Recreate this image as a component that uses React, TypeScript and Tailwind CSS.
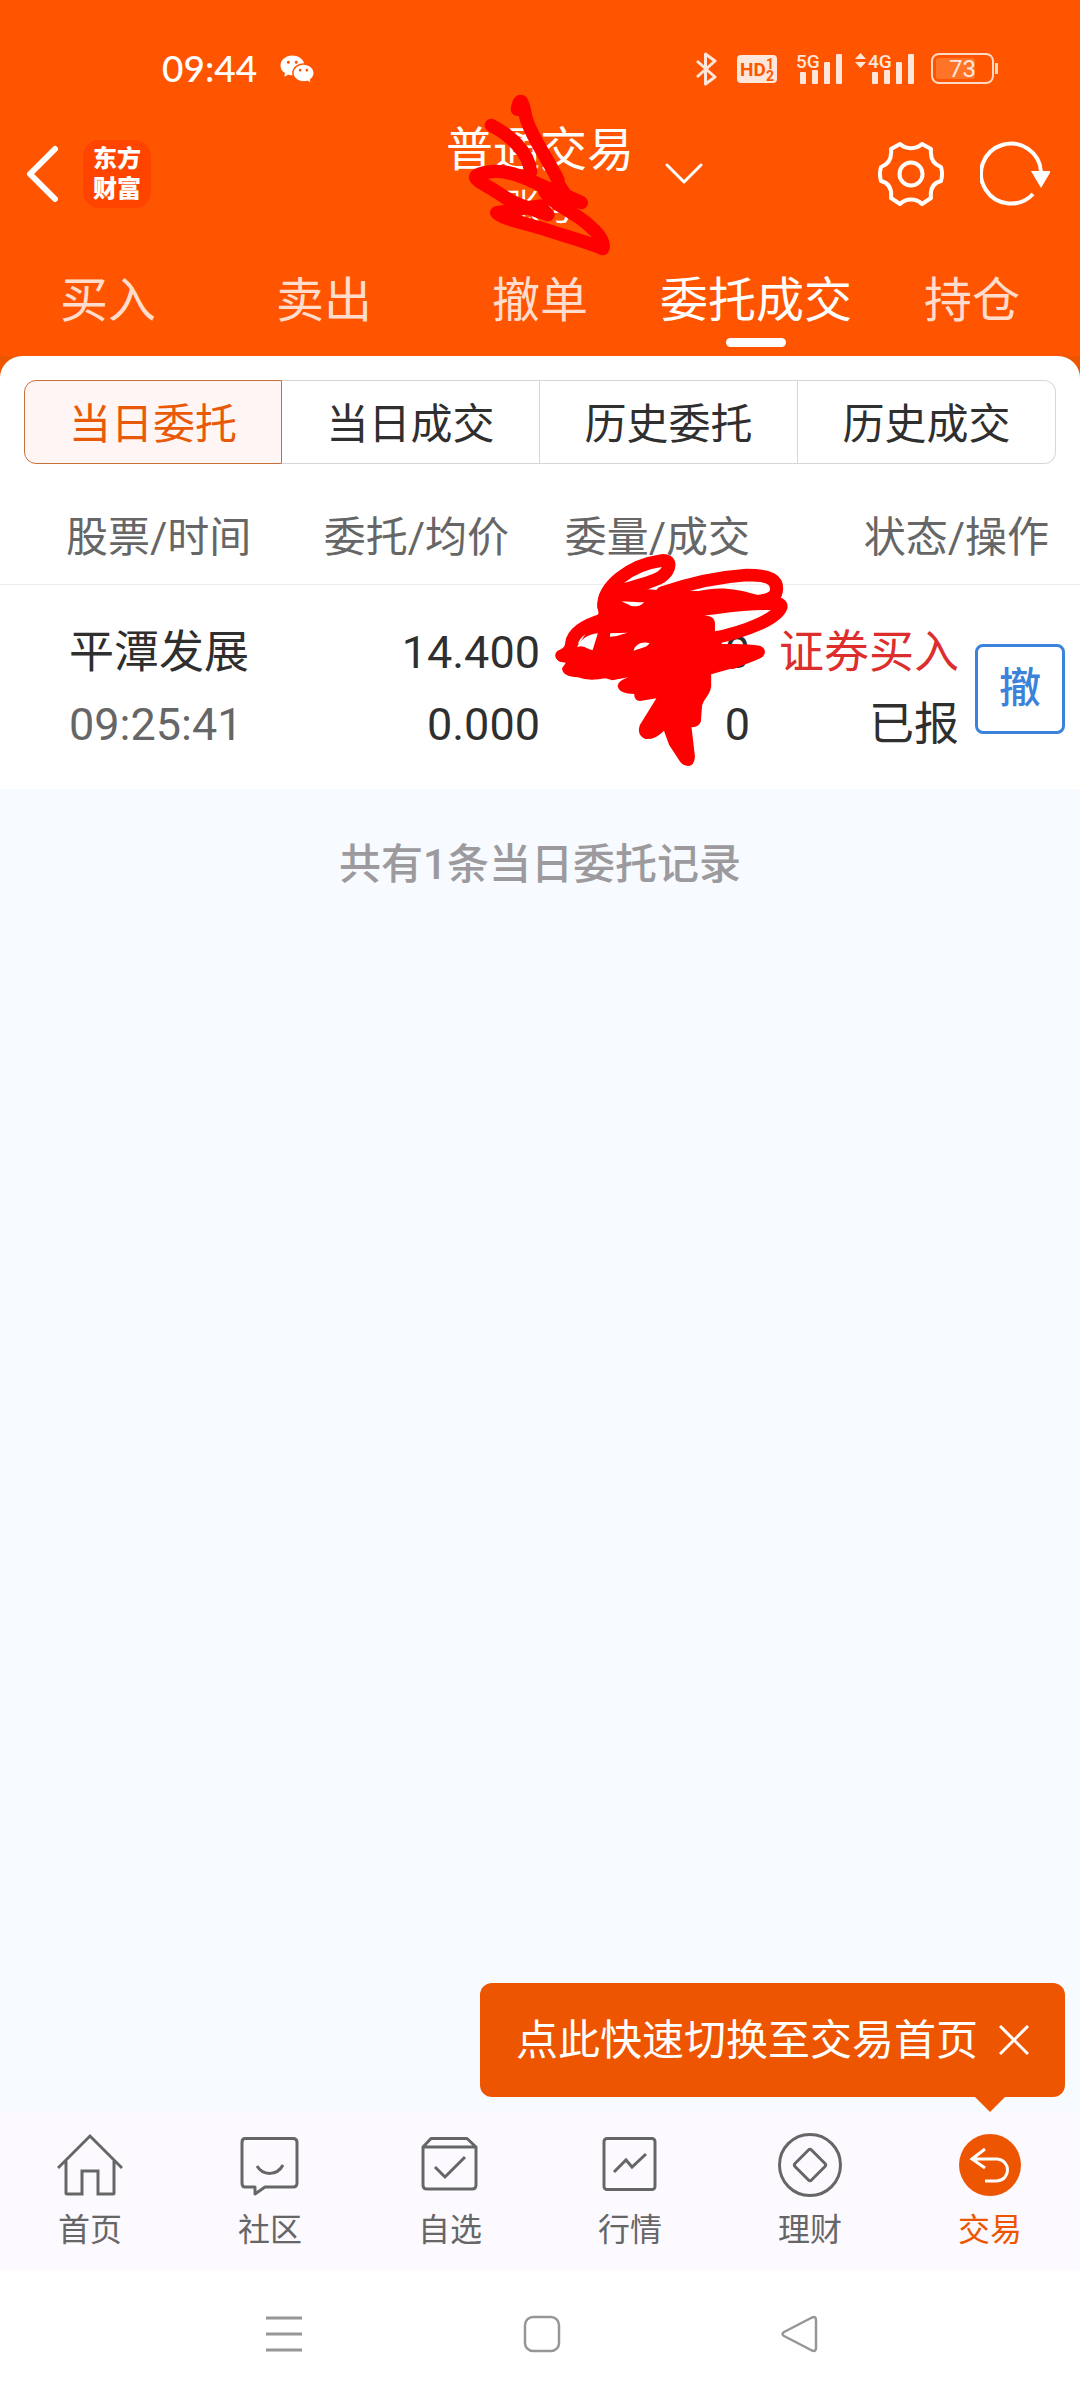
import type { ReactNode } from "react";
import { RiWechatFill } from "react-icons/ri";

const tradeTabs = ["买入", "卖出", "撤单", "委托成交", "持仓"];
const orderTabs = ["当日委托", "当日成交", "历史委托", "历史成交"];

/* ---------- Status bar ---------- */

function Signal({ label, arrows }: { label: string; arrows?: boolean }) {
  const x = arrows ? 14 : 0;
  return (
    <svg width={46 + x} height="34" viewBox={`0 0 ${46 + x} 34`} fill="#ffe6da" overflow="visible">
      {arrows && <path d="M0 7 5.500 1 11 7ZM0 10h11l-5.500 6Z" />}
      <text x={x - 1} y="16" fontFamily="Roboto" fontSize="19" fontWeight="500">
        {label}
      </text>
      <rect x={x + 3} y="20" width="6" height="12" rx="1" />
      <rect x={x + 15} y="18" width="6" height="14" rx="1" />
      <rect x={x + 27} y="10" width="6" height="22" rx="1" />
      <rect x={x + 39} y="2" width="6" height="30" rx="1" />
    </svg>
  );
}

function StatusBar() {
  return (
    <div className="flex items-center pt-12 pr-[82px] pl-[162px] text-white">
      <span className="pb-0.5 font-['Lato'] text-[37px] leading-10 font-medium">09:44</span>
      <RiWechatFill className="ml-[22px] size-9" />
      <div className="ml-auto flex items-center">
        <svg width="21" height="34" viewBox="0 0 21 34" fill="none" stroke="#ffe6da" strokeWidth="3">
          <path d="M1 9 19 25 9.500 32V2L19 9 1 25" strokeLinejoin="round" />
        </svg>
        <svg className="ml-5" width="40" height="28" viewBox="0 0 40 28">
          <rect width="40" height="28" rx="4" fill="#ffe6da" />
          <g fill="#ff5500" fontFamily="Roboto" fontWeight="700">
            <text x="3" y="21" fontSize="19">HD</text>
            <text x="29" y="14" fontSize="14">1</text>
            <text x="29" y="26" fontSize="14">2</text>
          </g>
        </svg>
        <div className="ml-5">
          <Signal label="5G" />
        </div>
        <div className="ml-3">
          <Signal label="4G" arrows />
        </div>
        <svg className="ml-4" width="67" height="32" viewBox="0 0 67 32">
          <rect x="1" y="1" width="61" height="29" rx="7" fill="none" stroke="#ffd9c4" strokeWidth="2" />
          <rect x="5" y="5" width="39" height="21" rx="3" fill="#ff7427" />
          <path d="M65.500 10v11" stroke="#ffd9c4" strokeWidth="3" />
          <text x="18" y="24" fill="#ffe6da" fontFamily="Roboto" fontSize="24">73</text>
        </svg>
      </div>
    </div>
  );
}

/* ---------- Header ---------- */

function GearIcon() {
  return (
    <svg width="66" height="66" viewBox="0 0 66 66" fill="none" stroke="#fff" strokeWidth="4" strokeLinejoin="round">
      <path d="M22 3C28 8.500 38 8.500 44 3L53 8C52 17 55 23 63 26C64.500 31 64.500 35 63 40C55 42 52 48 53 57L44 63C38 57 28 57 22 63L13 57C14 48 11 42 3 40C1.500 35 1.500 31 3 26C11 23 14 17 13 8Z" />
      <circle cx="33" cy="33" r="11.500" />
    </svg>
  );
}

function RefreshIcon() {
  return (
    <svg width="70" height="66" viewBox="0 0 70 66" fill="none">
      <path d="M61 31A30 30 0 1 0 53 53" stroke="#fff" strokeWidth="4" />
      <path d="M51 30h20L61 47Z" fill="#fff" />
    </svg>
  );
}

// hand-drawn strokes that hide the account
function AccountScribble() {
  return (
    <svg
      className="pointer-events-none absolute top-[80px] left-1/2 -ml-[120px]"
      width="300"
      height="190"
      viewBox="0 0 900 570"
      fill="none"
      stroke="#f00"
      strokeWidth="40"
      strokeLinecap="round"
      strokeLinejoin="round"
    >
      <path d="M292 88C296 64 302 62 305 66C312 76 314 100 320 120C340 180 380 230 414 300V318" />
      <path d="M214 136C270 165 325 215 332 275" />
      <path d="M484 368C450 350 400 335 350 310C300 285 250 270 215 275C165 280 150 290 190 312C240 338 270 370 320 382L384 404L360 378C310 385 260 392 230 398C240 415 320 430 380 450C440 470 500 485 548 506C560 480 510 430 450 395C420 378 390 360 374 335" />
      <path d="M380 330 420 320 440 350 400 345" />
    </svg>
  );
}

function Header() {
  return (
    <header className="relative bg-[#ff5500] text-white">
      <StatusBar />
      <div className="grid h-[168px] grid-cols-[1fr_auto_1fr] items-center">
        <div className="flex items-center pl-[25px]">
          <button aria-label="返回">
            <svg width="34" height="58" viewBox="0 0 34 58" fill="none" stroke="#fff" strokeWidth="6" strokeLinecap="round" strokeLinejoin="round">
              <path d="M30 4 5 29l25 25" />
            </svg>
          </button>
          <div className="ml-6 flex size-[68px] items-center justify-center rounded-2xl bg-[#ff4400] text-center text-2xl leading-[30px] font-black">
            <span>
              东方
              <br />
              财富
            </span>
          </div>
        </div>
        <div className="pt-2 text-center">
          <h1 className="text-[47px] leading-[60px]">普通交易</h1>
          <p className="text-4xl leading-[56px]">账号</p>
        </div>
        <div className="flex items-center pr-[30px]">
          <button aria-label="切换账户" className="ml-[31px]">
            <svg width="38" height="22" viewBox="0 0 38 22" fill="none" stroke="#fff" strokeWidth="3" strokeLinecap="round" strokeLinejoin="round">
              <path d="M2 2 19 19 36 2" />
            </svg>
          </button>
          <button aria-label="设置" className="ml-auto">
            <GearIcon />
          </button>
          <button aria-label="刷新" className="ml-9">
            <RefreshIcon />
          </button>
        </div>
      </div>
      <nav className="grid grid-cols-5 pt-1.5 pb-[9px]">
        {tradeTabs.map((tab) => {
          const active = tab === "委托成交";
          return (
            <button key={tab} className={`flex flex-col items-center text-[48px] leading-[74px] ${active ? "text-white" : "text-[#ffdccb]"}`}>
              {tab}
              <span className={`h-[9px] w-[60px] rounded-full ${active ? "bg-white" : ""}`} />
            </button>
          );
        })}
      </nav>
      <AccountScribble />
    </header>
  );
}

/* ---------- Orders ---------- */

function AmountScribble() {
  return (
    <svg
      className="pointer-events-none absolute top-0 left-1/2"
      width="540"
      height="298"
      viewBox="0 6 1568 894"
      preserveAspectRatio="none"
      fill="none"
      stroke="#f00"
      strokeWidth="38"
      strokeLinecap="round"
      strokeLinejoin="round"
    >
      <path
        stroke="none"
        fill="#f00"
        d="M167 350 185 310 230 290 340 300 460 303C520 288 570 296 630 314L700 322 690 360C600 358 530 370 472 378 495 375 508 385 508 400V430L540 425 525 462 640 468 640 500 575 530 497 553V590C492 620 470 630 470 655L467 695Q460 712 440 712L450 800Q448 828 430 828 412 826 405 812L375 765 360 722Q335 750 305 747 280 735 290 705L338 625 290 633Q272 630 274 612 230 610 226 590 222 575 256 562L210 571 190 565Q140 575 110 562 65 560 64 535L75 518Q45 515 44 497 45 475 80 478L115 460 170 370Z"
      />
      <path d="M185 350C182 290 260 225 350 212C385 205 380 240 350 262C310 285 230 300 205 310" />
      <path d="M355 308C420 285 500 262 600 255C670 255 692 270 686 305C684 325 650 335 610 335" />
      <path d="M600 335C670 335 700 335 700 350C690 385 600 425 500 445" />
      <path d="M180 390C130 405 95 430 92 460C92 480 80 490 65 497" />
      <path d="M490 485C540 480 600 480 634 486C610 500 570 510 560 518" />
      <path fill="#fff" stroke="none" d="M108 472C115 450 140 432 168 430L153 480C135 478 125 462 108 472ZM272 482C275 462 300 452 318 460 312 472 292 474 272 482ZM203 440 204 430 258 428C240 430 225 440 203 440ZM236 334C260 335 285 338 302 336 295 350 270 352 258 344Z" />
    </svg>
  );
}

function Orders() {
  return (
    <section className="bg-[#ee5500]">
      <div className="rounded-t-[22px] bg-white pt-6">
        <div className="mx-6 grid grid-cols-4">
          {orderTabs.map((tab, i) => (
            <button
              key={tab}
              className={`h-[84px] border pt-1 text-[42px] first:rounded-l-xl last:rounded-r-xl ${
                i === 0 ? "border-[#c66f38] bg-[#fff5f5] text-[#e85a08]" : "border-l-0 border-[#d6d6dc] text-[#2f2f2f]"
              }`}
            >
              {tab}
            </button>
          ))}
        </div>
        <div className="relative mt-7">
          <table className="w-full table-fixed">
            <colgroup>
              <col className="w-1/4" />
              <col className="w-1/4" />
              <col className="w-[210px]" />
              <col className="w-[330px]" />
            </colgroup>
            <thead>
              <tr className="h-[92px] border-b border-[#ededed] text-[42px] whitespace-nowrap text-[#666]">
                <th className="pl-[66px] text-left font-normal">股票/时间</th>
                <th className="pr-[31px] text-right font-normal">委托/均价</th>
                <th className="text-right font-normal">委量/成交</th>
                <th className="pr-[31px] text-right font-normal">状态/操作</th>
              </tr>
            </thead>
            <tbody>
              <tr className="text-[45px] leading-[72px] whitespace-nowrap text-[#2f2f2f]">
                <td className="pt-8 pb-7 pl-[69px]">
                  <div>平潭发展</div>
                  <div className="text-[#666]">09:25:41</div>
                </td>
                <td className="pt-8 pb-7 text-right">
                  <div>14.400</div>
                  <div>0.000</div>
                </td>
                <td className="pt-8 pb-7 text-right">
                  <div>00</div>
                  <div>0</div>
                </td>
                <td className="pt-8 pr-[15px] pb-7">
                  <div className="flex items-center justify-end gap-4">
                    <div className="text-right">
                      <div className="text-[#dd2e2e]">证券买入</div>
                      <div>已报</div>
                    </div>
                    <button className="size-[90px] rounded-lg border-3 border-[#3a82da] text-[42px] leading-none font-medium text-[#3a82da]">
                      撤
                    </button>
                  </div>
                </td>
              </tr>
            </tbody>
          </table>
          <AmountScribble />
        </div>
      </div>
    </section>
  );
}

/* ---------- Bottom bars ---------- */

function NavItem({ label, active, children }: { label: string; active?: boolean; children: ReactNode }) {
  return (
    <a href="#" className={`flex flex-col items-center text-[32px] leading-[48px] ${active ? "text-[#ee5500]" : "text-[#666]"}`}>
      <svg width="66" height="66" viewBox="0 0 66 66" fill="none" stroke="currentColor" strokeWidth="3">
        {children}
      </svg>
      <span className="mt-2">{label}</span>
    </a>
  );
}

function BottomNav() {
  return (
    <nav className="grid grid-cols-6 bg-[#fdfaff] pt-5 pb-4">
      <NavItem label="首页">
        <path d="M1 36 33 4 65 36M9 29V61Q9 62 10 62H25V39H41V62H56Q57 62 57 61V29" />
      </NavItem>
      <NavItem label="社区">
        <path d="M8 6.500H56Q60 6.500 60 10.500V51Q60 55 56 55H28L18 62V55H8Q5 55 5 51V10.500Q5 6.500 8 6.500Z" strokeLinejoin="round" />
        <path d="M20 34C26 44 40 44 46 33" />
      </NavItem>
      <NavItem label="自选">
        <path d="M6 15 14 6.500H50L59 15V53Q59 57 55 57H10Q6 57 6 53ZM6 15H59" strokeLinejoin="round" />
        <path d="M18 35 28 45 48 25" />
      </NavItem>
      <NavItem label="行情">
        <rect x="7" y="6.500" width="51" height="51" rx="3" />
        <path d="M17 40 29 28 35 35 49 22" />
      </NavItem>
      <NavItem label="理财">
        <circle cx="33" cy="33" r="30.500" />
        <path d="M31.500 18Q33 16.500 34.500 18L48 31.500Q49.500 33 48 34.500L34.500 48Q33 49.500 31.500 48L18 34.500Q16.500 33 18 31.500Z" />
      </NavItem>
      <NavItem label="交易" active>
        <circle cx="33" cy="33" r="31" fill="currentColor" stroke="none" />
        <path d="M28 17 15 27 28 36M15 27H40C54 28 54 48 40 49H28" stroke="#fff" />
      </NavItem>
    </nav>
  );
}

function SystemNav() {
  return (
    <div className="flex h-[130px] items-center justify-center gap-[220px] bg-white pb-0.5 pl-1">
      <button aria-label="最近任务">
        <svg width="38" height="38" viewBox="0 0 38 38" stroke="#969696" strokeWidth="3">
          <path d="M1 3h36M1 19h36M1 35h36" />
        </svg>
      </button>
      <button aria-label="主屏幕">
        <svg width="38" height="38" viewBox="0 0 38 38" fill="none" stroke="#969696" strokeWidth="2.500">
          <rect x="2" y="2" width="34" height="34" rx="8" />
        </svg>
      </button>
      <button aria-label="返回上一页">
        <svg width="38" height="38" viewBox="0 0 38 38" fill="none" stroke="#969696" strokeWidth="2.500" strokeLinejoin="round">
          <path d="M3 17 31 2.500Q35 1 35 5V33Q35 37 31 35.500L3 21Q0 19 3 17Z" />
        </svg>
      </button>
    </div>
  );
}

function QuickSwitchTip() {
  return (
    <div className="absolute right-[15px] bottom-[15px] flex h-[114px] items-center rounded-xl bg-[#ee5500] px-9 text-[42px] whitespace-nowrap text-white">
      <span>点此快速切换至交易首页</span>
      <button aria-label="关闭" className="ml-[21px]">
        <svg width="30" height="30" viewBox="0 0 30 30" stroke="#fff" strokeWidth="3">
          <path d="M1 1 29 29M29 1 1 29" />
        </svg>
      </button>
      <svg className="absolute top-full right-[60px]" width="30" height="15" viewBox="0 0 30 15" fill="#ee5500">
        <path d="M0 0H30L15 15Z" />
      </svg>
    </div>
  );
}

export default function App() {
  return (
    <div className="flex min-h-screen flex-col bg-[#f7faff] font-['Roboto','Noto_Sans_CJK_SC',sans-serif]">
      <Header />
      <Orders />
      <main className="relative flex-1">
        <p className="pt-11 text-center text-[42px] leading-[64px] font-medium text-[#9c9a9c]">共有1条当日委托记录</p>
        <QuickSwitchTip />
      </main>
      <BottomNav />
      <SystemNav />
    </div>
  );
}
